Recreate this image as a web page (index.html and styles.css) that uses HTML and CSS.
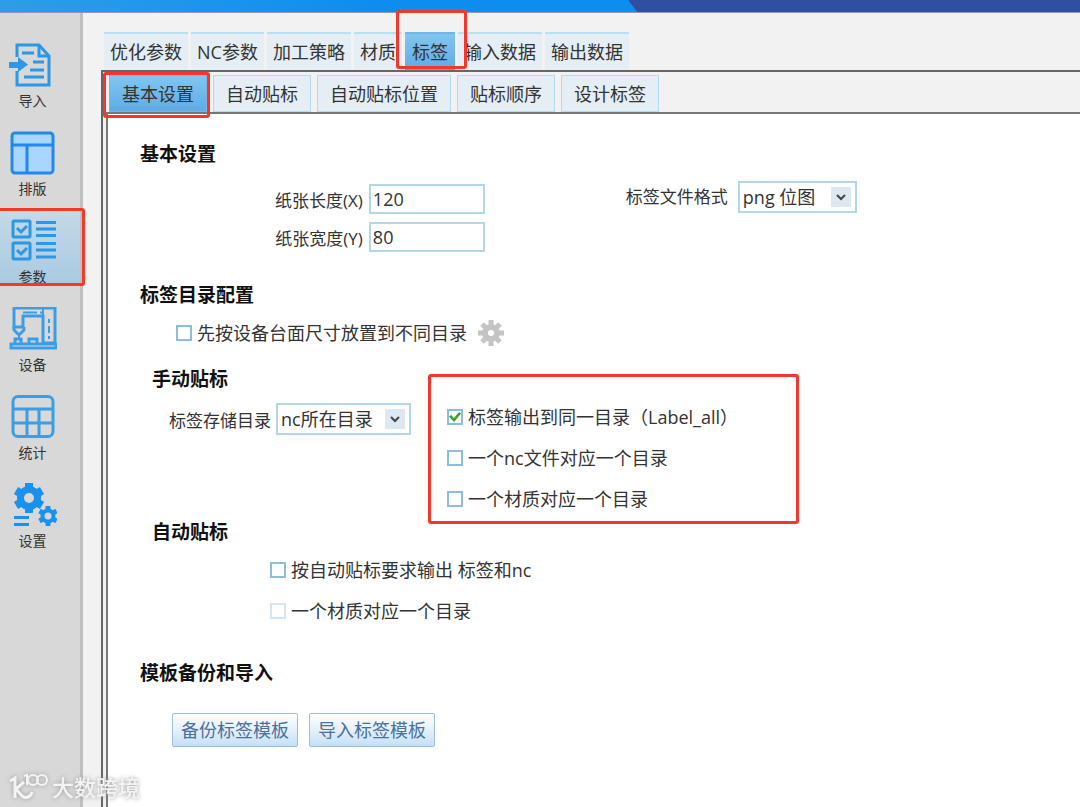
FILE: index.html
```html
<!DOCTYPE html>
<html lang="zh-CN">
<head>
    <meta charset="UTF-8">
    <meta name="viewport" content="width=device-width, initial-scale=1.0">
    <title>标签 - 基本设置</title>
    <link rel="stylesheet" href="styles.css">
</head>
<body>

    <header class="topbar">
        <div class="topbar-fill"></div>
    </header>

    <div class="layout">
        <!-- Sidebar -->
        <nav class="sidebar">
            <a href="#import" class="side-item">
                <svg width="48" height="44" viewBox="0 0 48 44" fill="none" stroke="#2b97e6" stroke-width="3">
                    <path d="M8 14V2H30L40 13V42H8V28"/>
                    <path d="M30 2V13H40"/>
                    <path d="M13 10H25M24 19H35M21 27H35M15 34H35"/>
                    <path d="M0 19H9V14L19 21.500L9 29V25H0Z" fill="#2b97e6" stroke="none"/>
                </svg>
                <span>导入</span>
            </a>
            <a href="#layout" class="side-item">
                <svg width="48" height="44" viewBox="0 0 48 44" fill="#a9d6ff" stroke="#2288ee" stroke-width="3">
                    <rect x="3" y="2" width="41" height="40" rx="3"/>
                    <path d="M3 14H44M18 14V42"/>
                </svg>
                <span>排版</span>
            </a>
            <a href="#params" class="side-item active">
                <svg width="48" height="44" viewBox="0 0 48 44" fill="none" stroke="#2b97e6" stroke-width="3">
                    <rect x="4" y="2" width="17" height="16" rx="1"/>
                    <rect x="4" y="24" width="17" height="16" rx="1"/>
                    <path d="M8 9L12 13L18 7M8 31L12 35L18 29" stroke-width="3"/>
                    <path d="M27 3.500H47M27 10H47M27 16.500H47M27 24.500H47M27 31H47M27 38H47"/>
                </svg>
                <span>参数</span>
            </a>
            <a href="#device" class="side-item">
                <svg width="48" height="44" viewBox="0 0 48 44" fill="none" stroke="#3a9de6" stroke-width="2">
                    <path d="M5 1H46V36H34V9H14V20H5Z" stroke-width="3"/>
                    <path d="M14 5.500H28M31 5.500H34"/>
                    <path d="M5 20V23L9 27H11L15 23V20" stroke-width="3"/>
                    <path d="M10 27V32M34 9V2"/>
                    <path d="M40 12V16M40 19V26M40 29V32"/>
                    <path d="M2 37H47V41H2Z" stroke-width="3"/>
                    <path d="M6 36V32H12V36M20 36V32H28V36" stroke-width="3"/>
                </svg>
                <span>设备</span>
            </a>
            <a href="#stats" class="side-item">
                <svg width="48" height="44" viewBox="0 0 48 44" fill="none" stroke="#3a9de6" stroke-width="3">
                    <rect x="4" y="1.500" width="40" height="40" rx="5"/>
                    <path d="M4 14H44M4 28H44M18 14V41M30 14V41"/>
                </svg>
                <span>统计</span>
            </a>
            <a href="#settings" class="side-item">
                <svg width="48" height="44" viewBox="0 0 48 44" fill="none" stroke="#1b91ef">
                    <g transform="translate(20 15)">
                        <circle r="8.500" stroke-width="7"/>
                        <path d="M0 -15V-10M0 15V10M13 -7.500L9 -5M13 7.500L9 5M-13 -7.500L-9 -5M-13 7.500L-9 5" stroke-width="8"/>
                    </g>
                    <g transform="translate(39 33)">
                        <circle r="5.500" stroke-width="4"/>
                        <path d="M0 -10V-6M0 10V6M8.500 -5L5 -3M8.500 5L5 3M-8.500 -5L-5 -3M-8.500 5L-5 3" stroke-width="5"/>
                    </g>
                    <path d="M5 34.500H20M5 41.500H20" stroke-width="3"/>
                </svg>
                <span>设置</span>
            </a>
        </nav>

        <!-- Main Section -->
        <main class="main">
            <div class="tabs">
                <button type="button" class="tab">优化参数</button>
                <button type="button" class="tab">NC参数</button>
                <button type="button" class="tab">加工策略</button>
                <button type="button" class="tab">材质</button>
                <button type="button" class="tab active">标签</button>
                <button type="button" class="tab">输入数据</button>
                <button type="button" class="tab">输出数据</button>
            </div>

            <div class="panel">
                <div class="subtabs">
                    <button type="button" class="subtab active">基本设置</button>
                    <button type="button" class="subtab">自动贴标</button>
                    <button type="button" class="subtab">自动贴标位置</button>
                    <button type="button" class="subtab">贴标顺序</button>
                    <button type="button" class="subtab">设计标签</button>
                </div>

                <form class="content">
                    <!-- Basic settings -->
                    <section>
                        <h2>基本设置</h2>
                        <div class="basic-row">
                            <div class="size-fields">
                                <label for="paperX">纸张长度(X)</label>
                                <input type="text" id="paperX" class="text-input" value="120">
                                <label for="paperY">纸张宽度(Y)</label>
                                <input type="text" id="paperY" class="text-input" value="80">
                            </div>
                            <div class="field">
                                <label for="fileFormat">标签文件格式</label>
                                <div class="select-box format-select">
                                    <select id="fileFormat">
                                        <option>png 位图</option>
                                    </select>
                                    <svg class="arrow" width="20" height="20" viewBox="0 0 20 20"><path d="M6 8L10 12L14 8" fill="none" stroke="#444" stroke-width="2"/></svg>
                                </div>
                            </div>
                        </div>
                    </section>

                    <!-- Label directory -->
                    <section class="directory">
                        <h2>标签目录配置</h2>
                        <div class="directory-row">
                            <label class="check"><input type="checkbox"> 先按设备台面尺寸放置到不同目录</label>
                            <button type="button" class="gear" aria-label="设置">
                                <svg width="26" height="26" viewBox="0 0 26 26" fill="none" stroke="#c4c4c4">
                                    <circle cx="13" cy="13" r="6" stroke-width="6"/>
                                    <path d="M13 0V5M13 21V26M0 13H5M21 13H26M4 4L8 8M18 18L22 22M22 4L18 8M8 18L4 22" stroke-width="5"/>
                                </svg>
                            </button>
                        </div>
                    </section>

                    <!-- Manual labelling -->
                    <section class="manual">
                        <h2>手动贴标</h2>
                        <div class="manual-row">
                            <div class="field">
                                <label for="saveDir">标签存储目录</label>
                                <div class="select-box dir-select">
                                    <select id="saveDir">
                                        <option>nc所在目录</option>
                                    </select>
                                    <svg class="arrow" width="20" height="20" viewBox="0 0 20 20"><path d="M6 8L10 12L14 8" fill="none" stroke="#444" stroke-width="2"/></svg>
                                </div>
                            </div>
                            <div class="check-list output-options">
                                <label class="check"><input type="checkbox" checked> 标签输出到同一目录（Label_all）</label>
                                <label class="check"><input type="checkbox"> 一个nc文件对应一个目录</label>
                                <label class="check"><input type="checkbox"> 一个材质对应一个目录</label>
                            </div>
                        </div>
                    </section>

                    <!-- Auto labelling -->
                    <section class="auto">
                        <h2>自动贴标</h2>
                        <div class="check-list auto-options">
                            <label class="check"><input type="checkbox"> 按自动贴标要求输出 标签和nc</label>
                            <label class="check"><input type="checkbox" disabled> 一个材质对应一个目录</label>
                        </div>
                    </section>

                    <!-- Template backup -->
                    <section class="template">
                        <h2>模板备份和导入</h2>
                        <div class="buttons">
                            <button type="button" class="btn">备份标签模板</button>
                            <button type="button" class="btn">导入标签模板</button>
                        </div>
                    </section>
                </form>
            </div>
        </main>
    </div>

    <div class="watermark">
        <svg width="40" height="28" viewBox="0 0 40 28" fill="none" stroke="#f4f4f4" stroke-width="3">
            <path d="M1 8L6 5V25M15 9L7 16L13 23C17 26 22 24 23 19"/>
            <path d="M15 3L18 2V12" stroke-width="2"/>
            <ellipse cx="24" cy="7" rx="5" ry="5" stroke-width="2"/>
            <ellipse cx="33" cy="7" rx="5" ry="5" stroke-width="2"/>
        </svg>
        <span>大数跨境</span>
    </div>

</body>
</html>
```

FILE: styles.css
```css
*, *::before, *::after {
    box-sizing: border-box;
}
body {
    font-family: "Open Sans", "Noto Sans CJK SC", sans-serif;
    font-size: 18px;
    line-height: 24px;
    color: #333;
    background-color: #f2f2f2;
    margin: 0;
    min-height: 100vh;
    display: flex;
    flex-direction: column;
}
button, input, select {
    font: inherit;
    color: inherit;
}
h2 {
    margin: 0;
    font-size: 19px;
    line-height: 28px;
    font-weight: bold;
    color: #111;
}
.topbar {
    height: 13px;
    background-color: #304fa1;
    border-bottom: 1px solid #8c9cb8;
}
.topbar-fill {
    width: 59%;
    height: 12px;
    background: linear-gradient(to right, #2f9de6, #0d8df0 60%);
    clip-path: polygon(0 0, calc(100% - 9px) 0, 100% 100%, 0 100%);
}
.layout {
    flex: 1;
    display: flex;
}

/* Sidebar */
.sidebar {
    width: 83px;
    flex-shrink: 0;
    padding-top: 21px;
    background-color: #d8d8d8;
    border-right: 3px solid #bfbfbf;
    display: flex;
    flex-direction: column;
    gap: 13px;
}
.side-item {
    position: relative;
    height: 75px;
    padding: 9px 15px 0 0;
    display: flex;
    flex-direction: column;
    align-items: center;
    gap: 4px;
    font-size: 14px;
    line-height: 20px;
    color: #333;
    text-decoration: none;
}
.side-item svg {
    flex-shrink: 0;
}
.side-item.active {
    background: linear-gradient(#c6d9e6, #a8cae1);
}

/* Red highlight frames */
.side-item.active::after,
.tab.active::after,
.subtab.active::after,
.output-options::after {
    content: "";
    position: absolute;
    z-index: 1;
    border: 3px solid #f5372b;
    border-radius: 3px;
    pointer-events: none;
}
.side-item.active::after {
    inset: -2px -5px -1px -4px;
}
.tab.active::after {
    inset: -24px -12px 1px -9px;
}
.subtab.active::after {
    inset: -4px -4px -7px -7px;
}
.output-options::after {
    top: -31px;
    left: -19px;
    bottom: -13px;
    width: 371px;
}

/* Tabs */
.main {
    flex: 1;
    min-width: 0;
    padding: 19px 0 0 18px;
    display: flex;
    flex-direction: column;
}
.tabs {
    display: flex;
    gap: 3px;
    padding-left: 3px;
}
.tab {
    position: relative;
    height: 38px;
    padding: 0 6px;
    border: none;
    border-top: 2px solid #b9dff0;
    background-color: #e4eef4;
    white-space: nowrap;
}
.tab.active {
    padding: 0 7px;
}
.subtab {
    position: relative;
    height: 37px;
    padding: 0 12px;
    border: 1px solid #b3dbee;
    background-color: #e4eef4;
    white-space: nowrap;
}
.tab.active, .subtab.active {
    background: linear-gradient(#82c6f0, #5eabe6);
    border-color: #6fb8e8;
}
.panel {
    flex: 1;
    border: 2px solid #666;
    border-width: 2px 0 0 2px;
    padding: 3px 0 0 3px;
    display: flex;
    flex-direction: column;
}
.subtabs {
    display: flex;
    gap: 6px;
    padding-left: 3px;
}

/* Form */
.content {
    flex: 1;
    padding: 26px 0 0 32px;
    background-color: #fff;
    border: 2px solid #777;
    border-width: 2px 0 0 2px;
}
.basic-row {
    margin-top: 13px;
    padding-left: 135px;
    display: flex;
    align-items: flex-start;
    gap: 141px;
}
.size-fields {
    padding-top: 3px;
    display: grid;
    grid-template-columns: auto 116px;
    gap: 8px 6px;
    align-items: center;
    text-align: right;
}
.size-fields label, .field label {
    font-size: 17px;
    padding-top: 4px;
}
.text-input {
    width: 100%;
    height: 30px;
    padding: 0 2px;
    border: 2px solid #b4d7e8;
    background-color: #fff;
}
.field {
    display: flex;
    align-items: center;
    gap: 6px;
}
.basic-row .field {
    gap: 10px;
}
.basic-row .field label {
    padding-top: 0;
}
.select-box {
    position: relative;
}
.format-select {
    width: 119px;
}
.dir-select {
    width: 135px;
}
.select-box select {
    appearance: none;
    width: 100%;
    height: 32px;
    padding: 0 28px 0 3px;
    border: 2px solid #b4d7e8;
    border-radius: 0;
    background-color: #fff;
}
.arrow {
    position: absolute;
    top: 6px;
    right: 6px;
    background-color: #dde8f1;
    pointer-events: none;
}
.check {
    display: flex;
    align-items: center;
    gap: 5px;
    white-space: nowrap;
}
.check input {
    appearance: none;
    width: 16px;
    height: 16px;
    margin: 0;
    border: 2px solid #8dbddc;
    background-color: #fff;
    display: grid;
    place-items: center;
}
.check input:checked::before {
    content: "";
    width: 12px;
    height: 10px;
    background-color: #3a9e1e;
    clip-path: polygon(0 45%, 18% 30%, 40% 62%, 84% 0, 100% 14%, 42% 100%);
}
.check input:disabled {
    border-color: #d2e6f2;
}
.check-list {
    display: flex;
    flex-direction: column;
    gap: 17px;
}
.directory {
    margin-top: 29px;
}
.directory-row {
    margin-top: 9px;
    padding-left: 36px;
    height: 30px;
    display: flex;
    align-items: center;
    gap: 11px;
}
.gear {
    width: 26px;
    height: 26px;
    padding: 0;
    border: none;
    background: none;
}
.gear svg {
    display: block;
}
.manual {
    margin-top: 17px;
    padding-left: 12px;
}
.manual-row {
    margin-top: 10px;
    padding-left: 17px;
    display: flex;
    align-items: flex-start;
    gap: 36px;
}
.manual-row .field {
    gap: 5px;
}
.output-options {
    position: relative;
    margin-top: 2px;
}
.auto {
    margin-top: 7px;
    padding-left: 12px;
}
.auto-options {
    margin-top: 12px;
    padding-left: 118px;
}
.template {
    margin-top: 36px;
}
.buttons {
    margin-top: 26px;
    padding-left: 32px;
    display: flex;
    gap: 11px;
}
.btn {
    height: 34px;
    padding: 0 8px;
    border: 1px solid #9dbdd6;
    border-radius: 2px;
    background: linear-gradient(#fff, #e4f0fb 50%, #c5e0f8);
    color: #4c7199;
}

/* Watermark */
.watermark {
    position: fixed;
    left: 9px;
    bottom: 6px;
    display: flex;
    align-items: center;
    gap: 3px;
    font-size: 22px;
    line-height: 28px;
    font-weight: 500;
    color: #f4f4f4;
    filter: drop-shadow(0 0 2px #999);
}
```
